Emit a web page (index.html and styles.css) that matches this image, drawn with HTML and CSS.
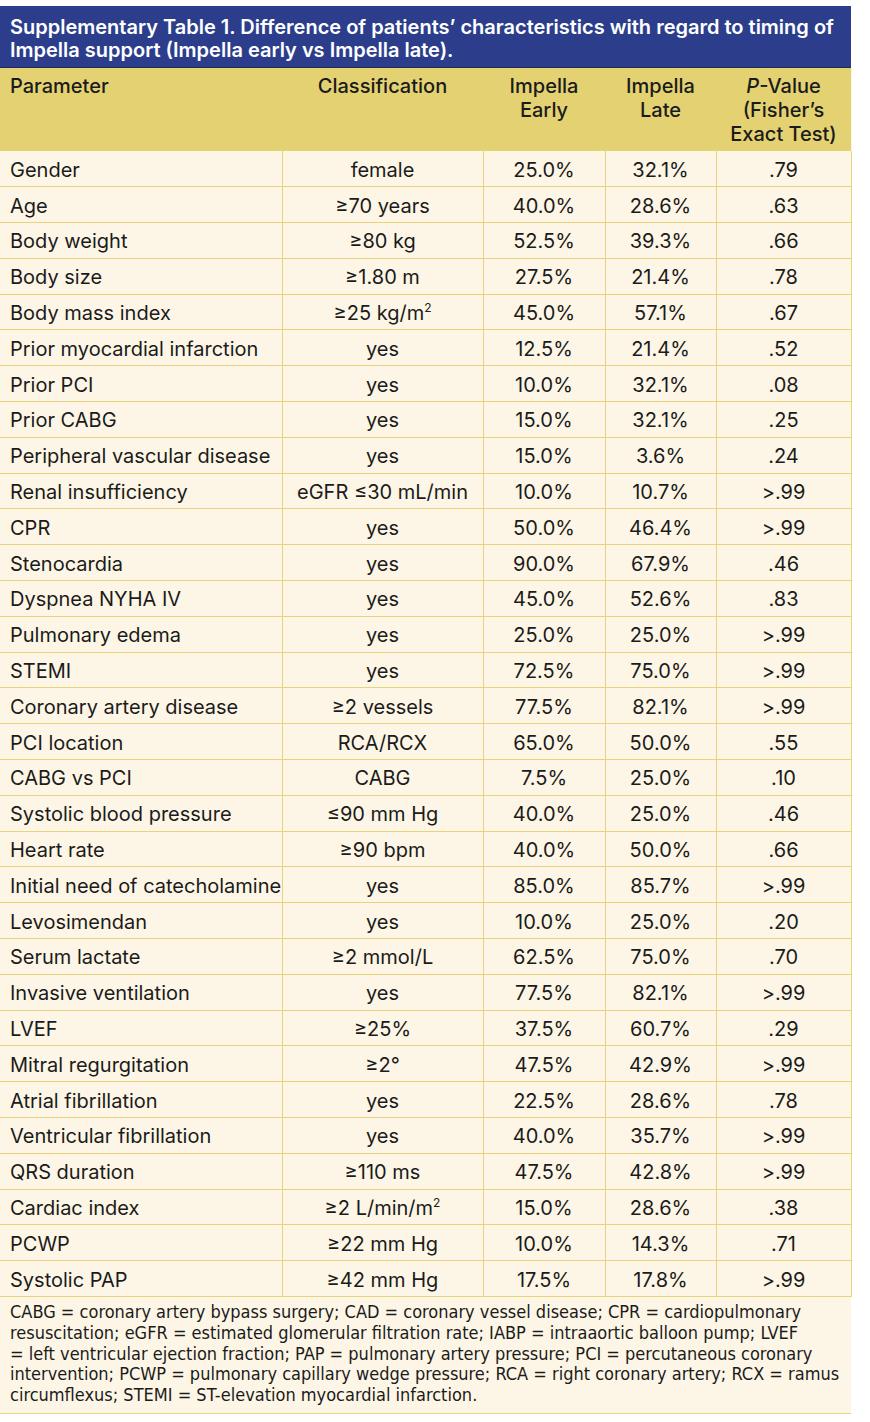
FILE: index.html
```html
<!DOCTYPE html>
<html lang="en">
<head>
<meta charset="utf-8">
<title>Supplementary Table 1</title>
<link rel="stylesheet" href="styles.css">
</head>
<body>
<div class="wrap">
  <div class="title">Supplementary Table 1. Difference of patients’ characteristics with regard to timing of Impella support (Impella early vs Impella late).</div>
  <table class="tbl">
    <colgroup>
      <col class="c1"><col class="c2"><col class="c3"><col class="c4"><col class="c5">
    </colgroup>
    <thead>
      <tr>
        <th class="left">Parameter</th>
        <th>Classification</th>
        <th>Impella<br>Early</th>
        <th>Impella<br>Late</th>
        <th><i>P</i>-Value<br>(Fisher’s<br>Exact Test)</th>
      </tr>
    </thead>
    <tbody>
      <tr><td>Gender</td><td>female</td><td>25.0%</td><td>32.1%</td><td>.79</td></tr>
      <tr><td>Age</td><td>≥70 years</td><td>40.0%</td><td>28.6%</td><td>.63</td></tr>
      <tr><td>Body weight</td><td>≥80 kg</td><td>52.5%</td><td>39.3%</td><td>.66</td></tr>
      <tr><td>Body size</td><td>≥1.80 m</td><td>27.5%</td><td>21.4%</td><td>.78</td></tr>
      <tr><td>Body mass index</td><td>≥25 kg/m<sup>2</sup></td><td>45.0%</td><td>57.1%</td><td>.67</td></tr>
      <tr><td>Prior myocardial infarction</td><td>yes</td><td>12.5%</td><td>21.4%</td><td>.52</td></tr>
      <tr><td>Prior PCI</td><td>yes</td><td>10.0%</td><td>32.1%</td><td>.08</td></tr>
      <tr><td>Prior CABG</td><td>yes</td><td>15.0%</td><td>32.1%</td><td>.25</td></tr>
      <tr><td>Peripheral vascular disease</td><td>yes</td><td>15.0%</td><td>3.6%</td><td>.24</td></tr>
      <tr><td>Renal insufficiency</td><td>eGFR ≤30 mL/min</td><td>10.0%</td><td>10.7%</td><td>&gt;.99</td></tr>
      <tr><td>CPR</td><td>yes</td><td>50.0%</td><td>46.4%</td><td>&gt;.99</td></tr>
      <tr><td>Stenocardia</td><td>yes</td><td>90.0%</td><td>67.9%</td><td>.46</td></tr>
      <tr><td>Dyspnea NYHA IV</td><td>yes</td><td>45.0%</td><td>52.6%</td><td>.83</td></tr>
      <tr><td>Pulmonary edema</td><td>yes</td><td>25.0%</td><td>25.0%</td><td>&gt;.99</td></tr>
      <tr><td>STEMI</td><td>yes</td><td>72.5%</td><td>75.0%</td><td>&gt;.99</td></tr>
      <tr><td>Coronary artery disease</td><td>≥2 vessels</td><td>77.5%</td><td>82.1%</td><td>&gt;.99</td></tr>
      <tr><td>PCI location</td><td>RCA/RCX</td><td>65.0%</td><td>50.0%</td><td>.55</td></tr>
      <tr><td>CABG vs PCI</td><td>CABG</td><td>7.5%</td><td>25.0%</td><td>.10</td></tr>
      <tr><td>Systolic blood pressure</td><td>≤90 mm Hg</td><td>40.0%</td><td>25.0%</td><td>.46</td></tr>
      <tr><td>Heart rate</td><td>≥90 bpm</td><td>40.0%</td><td>50.0%</td><td>.66</td></tr>
      <tr><td>Initial need of catecholamine</td><td>yes</td><td>85.0%</td><td>85.7%</td><td>&gt;.99</td></tr>
      <tr><td>Levosimendan</td><td>yes</td><td>10.0%</td><td>25.0%</td><td>.20</td></tr>
      <tr><td>Serum lactate</td><td>≥2 mmol/L</td><td>62.5%</td><td>75.0%</td><td>.70</td></tr>
      <tr><td>Invasive ventilation</td><td>yes</td><td>77.5%</td><td>82.1%</td><td>&gt;.99</td></tr>
      <tr><td>LVEF</td><td>≥25%</td><td>37.5%</td><td>60.7%</td><td>.29</td></tr>
      <tr><td>Mitral regurgitation</td><td>≥2°</td><td>47.5%</td><td>42.9%</td><td>&gt;.99</td></tr>
      <tr><td>Atrial fibrillation</td><td>yes</td><td>22.5%</td><td>28.6%</td><td>.78</td></tr>
      <tr><td>Ventricular fibrillation</td><td>yes</td><td>40.0%</td><td>35.7%</td><td>&gt;.99</td></tr>
      <tr><td>QRS duration</td><td>≥110 ms</td><td>47.5%</td><td>42.8%</td><td>&gt;.99</td></tr>
      <tr><td>Cardiac index</td><td>≥2 L/min/m<sup>2</sup></td><td>15.0%</td><td>28.6%</td><td>.38</td></tr>
      <tr><td>PCWP</td><td>≥22 mm Hg</td><td>10.0%</td><td>14.3%</td><td>.71</td></tr>
      <tr><td>Systolic PAP</td><td>≥42 mm Hg</td><td>17.5%</td><td>17.8%</td><td>&gt;.99</td></tr>
    </tbody>
  </table>
  <div class="foot">CABG = coronary artery bypass surgery; CAD = coronary vessel disease; CPR = cardiopulmonary<br>resuscitation; eGFR = estimated glomerular filtration rate; IABP = intraaortic balloon pump; LVEF<br>= left ventricular ejection fraction; PAP = pulmonary artery pressure; PCI = percutaneous coronary<br>intervention; PCWP = pulmonary capillary wedge pressure; RCA = right coronary artery; RCX = ramus<br>circumflexus; STEMI = ST-elevation myocardial infarction.</div>
</div>
</body>
</html>
```
FILE: styles.css
```css
html, body {
  margin: 0;
  padding: 0;
  background: #ffffff;
}
body {
  font-family: Inter, "Open Sans", "Liberation Sans", sans-serif;
  color: #1b1b1b;
}
.wrap {
  width: 851px;
  margin-top: 6px;
}
.title {
  background: #2c3e8b;
  color: #ffffff;
  font-weight: 600;
  font-size: 20px;
  line-height: 23px;
  padding: 10px 10px 5px 10px;
  height: 46px;
  border-bottom: 1px solid #1e2a5a;
}
.tbl {
  width: 851px;
  border-collapse: collapse;
  table-layout: fixed;
  background: #fdf6e6;
}
.c1 { width: 282px; }
.c2 { width: 201px; }
.c3 { width: 122px; }
.c4 { width: 111px; }
.c5 { width: 135px; }
.tbl th {
  background: #e4d272;
  font-weight: 500;
  font-size: 20px;
  line-height: 24px;
  text-align: center;
  vertical-align: top;
  padding: 6px 2px 0 2px;
  height: 77px;
}
.tbl th.left {
  text-align: left;
  padding-left: 10px;
}
.tbl td {
  font-size: 20px;
  height: 35.8px;
  padding: 2px 2px 0 2px;
  text-align: center;
  border: 1px solid #e6d37c;
  box-sizing: border-box;
  line-height: 24px;
  white-space: nowrap;
}
.tbl td:first-child {
  text-align: left;
  padding-left: 10px;
  border-left: none;
}
.tbl tbody tr:first-child td {
  border-top: none;
}
.tbl sup {
  font-size: 12px;
  line-height: 0;
  vertical-align: 8px;
}
.foot {
  background: #fdf6e6;
  font-family: "DejaVu Sans Condensed", "Liberation Sans Narrow", "Liberation Sans", sans-serif;
  font-size: 18px;
  line-height: 20.8px;
  padding: 5px 0 7px 10px;
  border-bottom: 1px solid #e6d37c;
  color: #1b1b1b;
  white-space: nowrap;
}
```
